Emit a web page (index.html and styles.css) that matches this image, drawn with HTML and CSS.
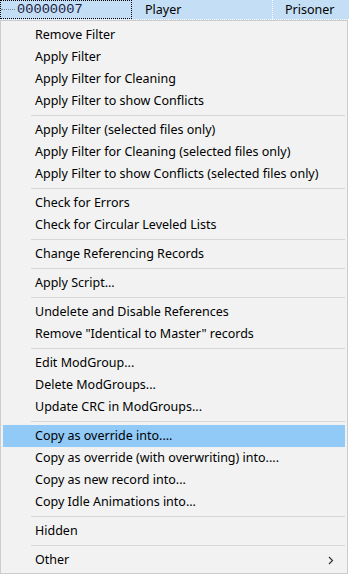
FILE: index.html
```html
<!DOCTYPE html>
<html lang="en">
<head>
    <meta charset="UTF-8">
    <meta name="viewport" content="width=device-width, initial-scale=1.0">
    <title>Record Context Menu</title>
    <link rel="stylesheet" href="styles.css">
</head>
<body>
    <div class="row">
        <div class="cell cell-id"><span class="tree-line"></span><span class="form-id">00000007</span></div>
        <div class="cell cell-edid">Player</div>
        <div class="cell cell-name">Prisoner</div>
    </div>

    <div class="menu">
        <div class="item">Remove Filter</div>
        <div class="item">Apply Filter</div>
        <div class="item">Apply Filter for Cleaning</div>
        <div class="item">Apply Filter to show Conflicts</div>
        <div class="sep"></div>
        <div class="item">Apply Filter (selected files only)</div>
        <div class="item">Apply Filter for Cleaning (selected files only)</div>
        <div class="item">Apply Filter to show Conflicts (selected files only)</div>
        <div class="sep"></div>
        <div class="item">Check for Errors</div>
        <div class="item">Check for Circular Leveled Lists</div>
        <div class="sep"></div>
        <div class="item">Change Referencing Records</div>
        <div class="sep"></div>
        <div class="item">Apply Script...</div>
        <div class="sep"></div>
        <div class="item">Undelete and Disable References</div>
        <div class="item">Remove "Identical to Master" records</div>
        <div class="sep"></div>
        <div class="item">Edit ModGroup...</div>
        <div class="item">Delete ModGroups...</div>
        <div class="item">Update CRC in ModGroups...</div>
        <div class="sep"></div>
        <div class="item active">Copy as override into....</div>
        <div class="item">Copy as override (with overwriting) into....</div>
        <div class="item">Copy as new record into...</div>
        <div class="item">Copy Idle Animations into...</div>
        <div class="sep"></div>
        <div class="item">Hidden</div>
        <div class="sep"></div>
        <div class="item has-sub">Other
            <svg class="arrow" width="6" height="9" viewBox="0 0 6 9"><path d="M1 1 L4.5 4.5 L1 8" fill="none" stroke="#333" stroke-width="1.2"/></svg>
        </div>
    </div>
</body>
</html>
```

FILE: styles.css
```css
body {
    margin: 0;
    padding: 0;
    background-color: #ffffff;
    font-family: "Noto Sans", "Open Sans", sans-serif;
    font-size: 12.5px;
    width: 349px;
    height: 574px;
    overflow: hidden;
}
.row {
    display: flex;
    height: 19px;
    background-color: #c4def5;
    border-bottom: 1px dotted #ffffff;
}
.cell {
    display: flex;
    align-items: center;
    color: #000;
    font-size: 12.5px;
}
.cell-id {
    width: 132px;
    border: 1px dotted #000;
    box-sizing: border-box;
}
.tree-line {
    width: 14px;
    margin-right: 2px;
    border-top: 1px dotted #808080;
}
.form-id {
    font-family: "Liberation Mono", monospace;
    font-size: 13.7px;
    color: #1a1a40;
}
.cell-edid {
    width: 141px;
    padding-left: 13px;
    box-sizing: border-box;
    border-right: 1px dotted #ffffff;
}
.cell-name {
    padding-left: 12px;
}
.menu {
    width: 348px;
    height: 554px;
    box-sizing: border-box;
    background-color: #f2f2f2;
    border: 1px solid #cccccc;
    padding: 3px 2px 2px 2px;
}
.item {
    position: relative;
    height: 22px;
    line-height: 22px;
    padding-left: 32px;
    color: #000;
    white-space: nowrap;
}
.item.active {
    background-color: #91c9f7;
}
.sep {
    height: 7px;
    margin-left: 28px;
    box-sizing: border-box;
    border-bottom: 1px solid #d7d7d7;
    transform: translateY(-3px);
}
.arrow {
    position: absolute;
    right: 11px;
    top: 7px;
}
```
